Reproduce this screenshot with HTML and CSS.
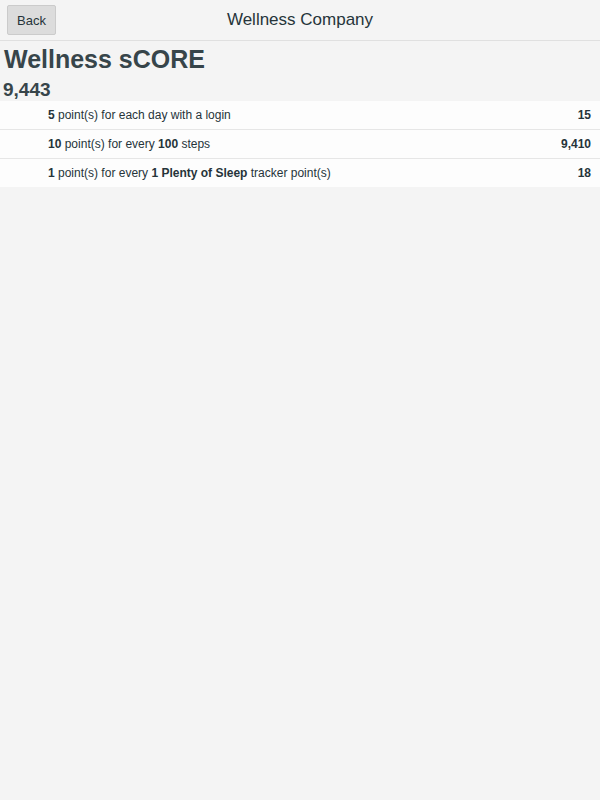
FILE: index.html
```html
<!DOCTYPE html>
<html lang="en">
<head>
    <meta charset="UTF-8">
    <meta name="viewport" content="width=device-width, initial-scale=1.0">
    <title>Wellness Company</title>
    <link rel="stylesheet" href="styles.css">
</head>
<body>
    <header class="topbar">
        <button type="button" class="back">Back</button>
        <div class="company">Wellness Company</div>
    </header>
    <main>
        <h1 class="title">Wellness sCORE</h1>
        <p class="total">9,443</p>
        <ul class="points">
            <li class="row">
                <span><b>5</b> point(s) for each day with a login</span>
                <b>15</b>
            </li>
            <li class="row">
                <span><b>10</b> point(s) for every <b>100</b> steps</span>
                <b>9,410</b>
            </li>
            <li class="row">
                <span><b>1</b> point(s) for every <b>1 Plenty of Sleep</b> tracker point(s)</span>
                <b>18</b>
            </li>
        </ul>
    </main>
</body>
</html>
```
FILE: styles.css
```css
*{
    box-sizing: border-box;
}
body{
    margin: 0;
    background-color: #f4f4f4;
    color: #26343a;
    font-family: "Liberation Sans", Arial, sans-serif;
}
.topbar{
    display: grid;
    grid-template-columns: 1fr auto 1fr;
    align-items: center;
    height: 41px;
    padding: 0 7px;
    border-bottom: 1px solid #e0e0e0;
}
.back{
    justify-self: start;
    height: 30px;
    padding: 0 9px;
    border: 1px solid #cbcbcb;
    border-radius: 2px;
    background-color: #dcdcdc;
    color: #26343a;
    font-family: inherit;
    font-size: 13px;
    cursor: pointer;
}
.company{
    font-size: 17px;
}
.title{
    margin: 0;
    padding: 3px 4px 0;
    color: #37454a;
    font-size: 25px;
    line-height: 30px;
}
.total{
    margin: 0;
    padding: 5px 3px 0;
    color: #37454a;
    font-size: 19px;
    font-weight: bold;
    line-height: 22px;
}
.points{
    margin: 0;
    padding: 0;
    list-style: none;
    background-color: #fdfdfd;
}
.row{
    display: flex;
    justify-content: space-between;
    padding: 7px 9px 6px 48px;
    font-size: 12px;
    line-height: 15px;
}
.row + .row{
    border-top: 1px solid #e6e6e6;
}
```
